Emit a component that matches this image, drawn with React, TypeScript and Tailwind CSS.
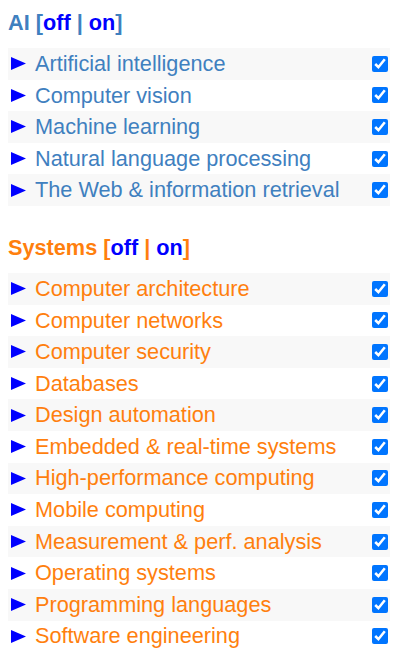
const ai = [
  "Artificial intelligence",
  "Computer vision",
  "Machine learning",
  "Natural language processing",
  "The Web & information retrieval",
]

const systems = [
  "Computer architecture",
  "Computer networks",
  "Computer security",
  "Databases",
  "Design automation",
  "Embedded & real-time systems",
  "High-performance computing",
  "Mobile computing",
  "Measurement & perf. analysis",
  "Operating systems",
  "Programming languages",
  "Software engineering",
]

function Arrow() {
  return (
    <svg width="15" height="13" viewBox="0 0 15 13" className="mr-[9px] shrink-0">
      <polygon points="0,0 15,6.5 0,13" fill="#0000ff" />
    </svg>
  )
}

function Section({ title, items, color }: { title: string; items: string[]; color: string }) {
  return (
    <div>
      <h2 className={`text-[21.7px] font-bold leading-[24px] ${color}`}>
        {title} [<span className="text-[#0000ff]">off</span> | <span className="text-[#0000ff]">on</span>]
      </h2>
      <div className="mt-[13px] w-[382px]">
        {items.map((item, i) => (
          <div
            key={item}
            className={`flex h-[31.6px] items-center justify-between pl-[3px] pr-[2px] ${i % 2 === 0 ? "bg-[#f8f8f8]" : ""}`}
          >
            <span className={`flex items-center text-[21.7px] leading-none ${color}`}>
              <Arrow />
              {item}
            </span>
            <input type="checkbox" defaultChecked className="h-4 w-4 accent-[#0075ff]" />
          </div>
        ))}
      </div>
    </div>
  )
}

export default function App() {
  return (
    <div className="px-2 pt-[11px] font-['Liberation_Sans',Arial,sans-serif]">
      <Section title="AI" items={ai} color="text-[#3f80bf]" />
      <div className="mt-[30px]">
        <Section title="Systems" items={systems} color="text-[#ff7f0e]" />
      </div>
    </div>
  )
}
